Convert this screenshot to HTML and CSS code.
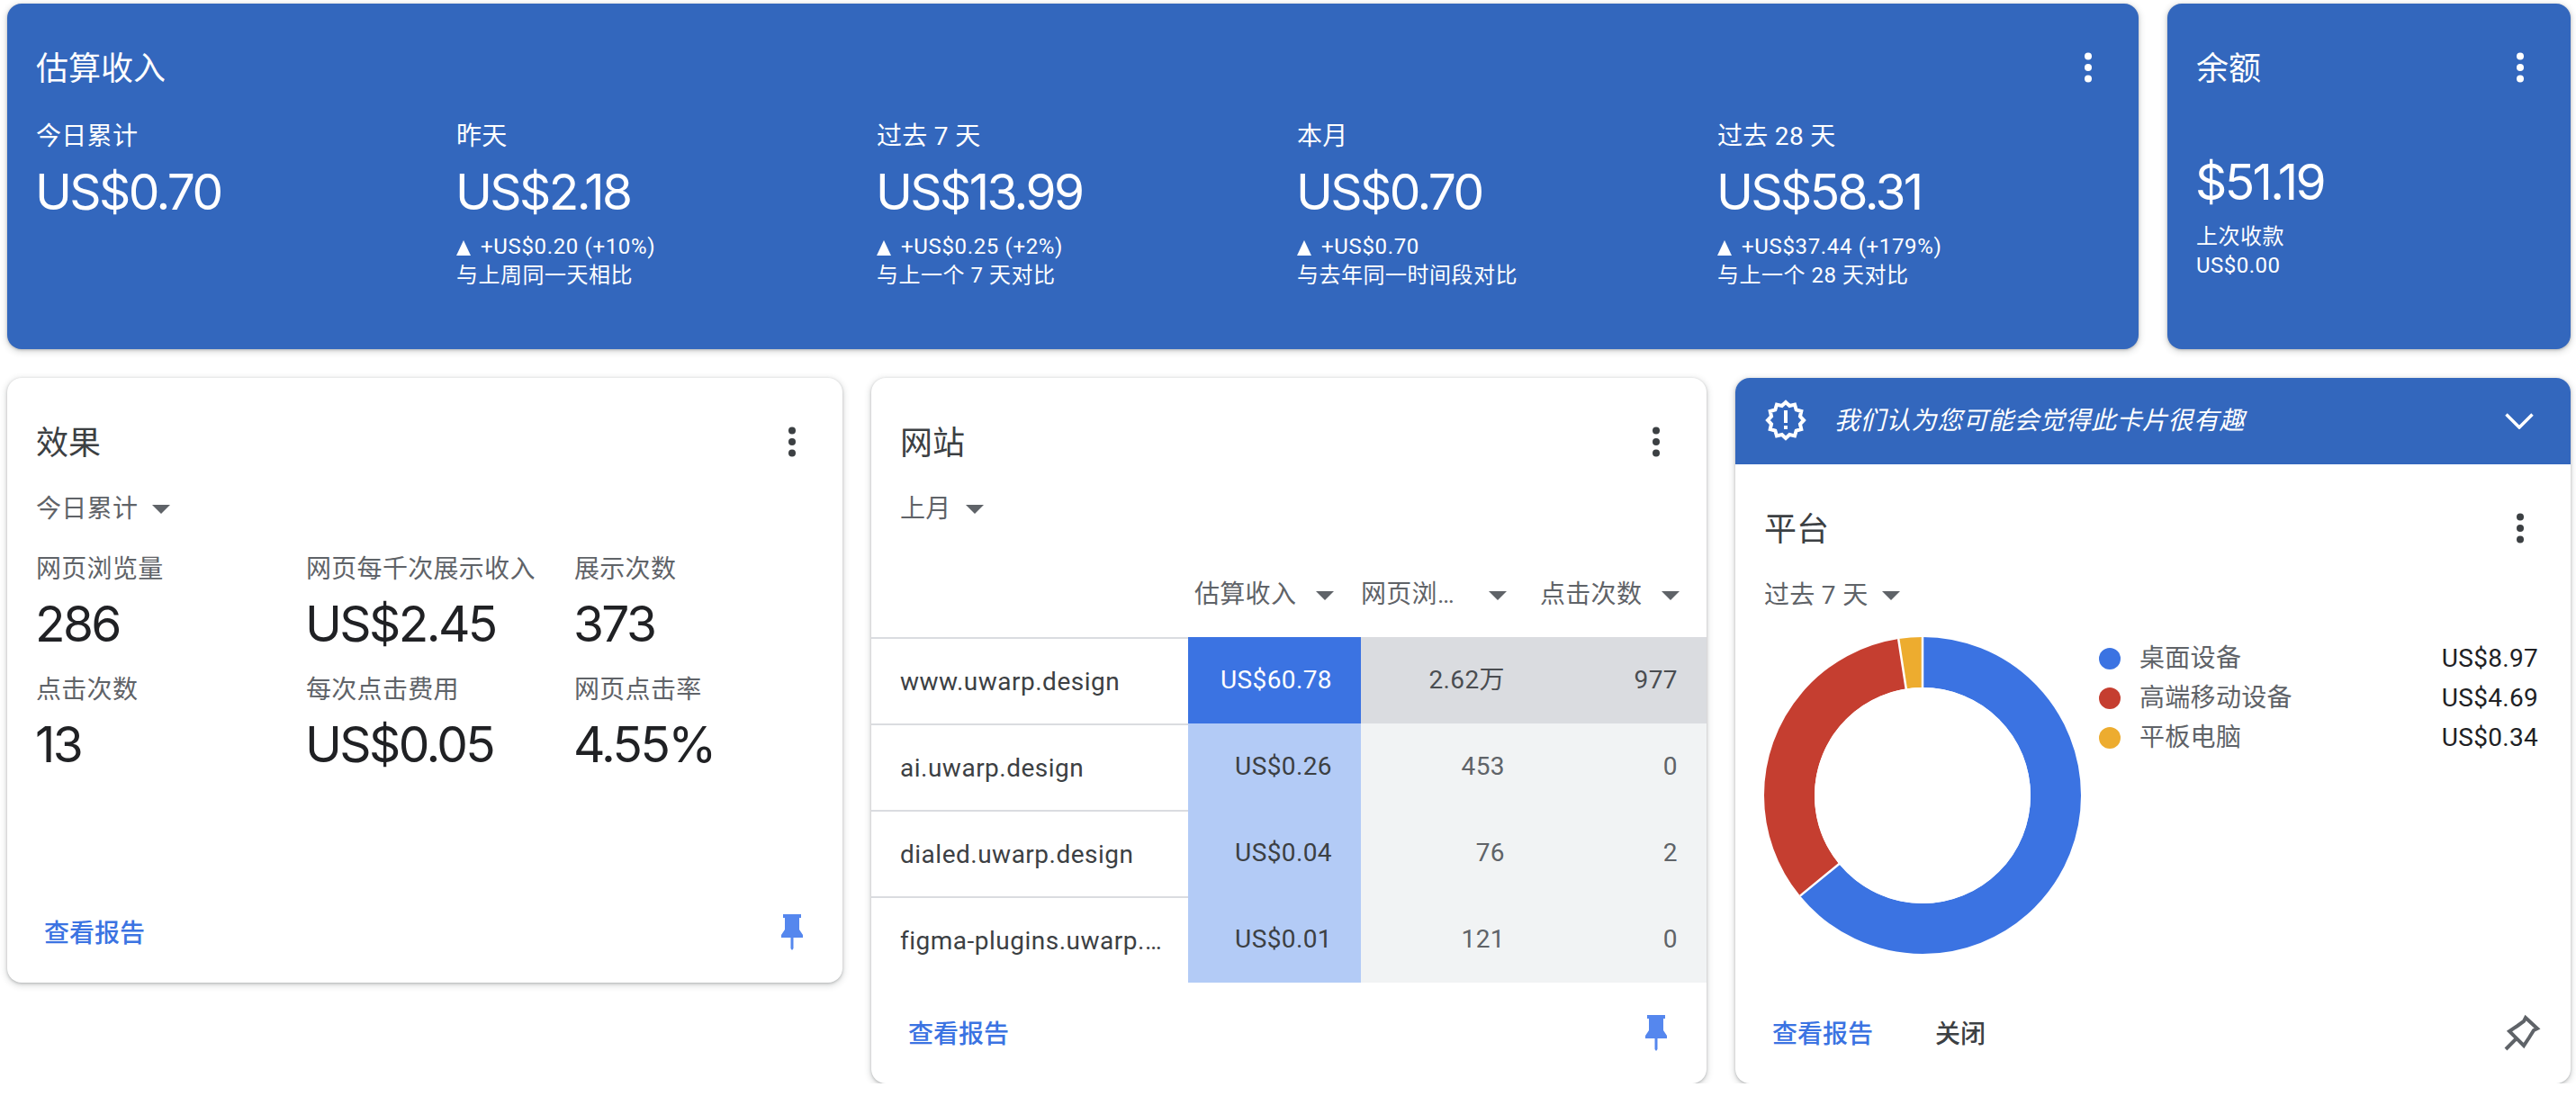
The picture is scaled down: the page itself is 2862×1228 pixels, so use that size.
FILE: index.html
```html
<!DOCTYPE html>
<html lang="zh-CN">
<head>
<meta charset="utf-8">
<title>AdSense</title>
<link rel="stylesheet" href="styles.css">
</head>
<body>
<svg class="defs" width="0" height="0" aria-hidden="true">
  <symbol id="kebab" viewBox="0 0 48 48"><circle cx="24" cy="11.5" r="4"/><circle cx="24" cy="24" r="4"/><circle cx="24" cy="36.5" r="4"/></symbol>
  <symbol id="pin" viewBox="0 0 24 40"><path d="M2 0H22V4H20V17L24 23V26H13.5V38L12 40L10.5 38V26H0V23L4 17V4H2Z"/></symbol>
</svg>
<main class="page">
  <section class="top-row">
    <article class="card blue earnings">
      <header class="card-head"><h2 class="title">估算收入</h2><svg class="kebab"><use href="#kebab"/></svg></header>
      <div class="earn-grid">
        <div><div class="label">今日累计</div><div class="big">US$0.70</div></div>
        <div><div class="label">昨天</div><div class="big">US$2.18</div><div class="note"><div class="delta"><i class="up"></i>+US$0.20 (+10%)</div><div>与上周同一天相比</div></div></div>
        <div><div class="label">过去 7 天</div><div class="big">US$13.99</div><div class="note"><div class="delta"><i class="up"></i>+US$0.25 (+2%)</div><div>与上一个 7 天对比</div></div></div>
        <div><div class="label">本月</div><div class="big">US$0.70</div><div class="note"><div class="delta"><i class="up"></i>+US$0.70</div><div>与去年同一时间段对比</div></div></div>
        <div><div class="label">过去 28 天</div><div class="big">US$58.31</div><div class="note"><div class="delta"><i class="up"></i>+US$37.44 (+179%)</div><div>与上一个 28 天对比</div></div></div>
      </div>
    </article>
    <article class="card blue balance">
      <header class="card-head"><h2 class="title">余额</h2><svg class="kebab"><use href="#kebab"/></svg></header>
      <div class="big balance-value">$51.19</div>
      <div class="note"><div>上次收款</div><div>US$0.00</div></div>
    </article>
  </section>

  <section class="bottom-row">
    <article class="card">
      <header class="card-head"><h2 class="title">效果</h2><svg class="kebab"><use href="#kebab"/></svg></header>
      <div class="range">今日累计<i class="tri"></i></div>
      <div class="perf-grid">
        <div><div class="label">网页浏览量</div><div class="big">286</div></div>
        <div><div class="label">网页每千次展示收入</div><div class="big">US$2.45</div></div>
        <div><div class="label">展示次数</div><div class="big">373</div></div>
        <div><div class="label">点击次数</div><div class="big">13</div></div>
        <div><div class="label">每次点击费用</div><div class="big">US$0.05</div></div>
        <div><div class="label">网页点击率</div><div class="big">4.55%</div></div>
      </div>
      <footer class="card-foot perf-foot"><a class="link">查看报告</a><svg class="pin"><use href="#pin"/></svg></footer>
    </article>

    <article class="card">
      <header class="card-head"><h2 class="title">网站</h2><svg class="kebab"><use href="#kebab"/></svg></header>
      <div class="range">上月<i class="tri"></i></div>
      <div class="sites">
        <div class="th"></div>
        <div class="th"><span class="th-text">估算收入</span><i class="tri"></i></div>
        <div class="th"><span class="th-text th-wide">网页浏…</span><i class="tri"></i></div>
        <div class="th"><span class="th-text">点击次数</span><i class="tri"></i></div>

        <div class="site"><span class="site-name">www.uwarp.design</span></div>
        <div class="num hot">US$60.78</div><div class="num dark">2.62万</div><div class="num dark">977</div>

        <div class="site"><span class="site-name">ai.uwarp.design</span></div>
        <div class="num cool">US$0.26</div><div class="num pale">453</div><div class="num pale">0</div>

        <div class="site"><span class="site-name">dialed.uwarp.design</span></div>
        <div class="num cool">US$0.04</div><div class="num pale">76</div><div class="num pale">2</div>

        <div class="site"><span class="site-name">figma-plugins.uwarp.…</span></div>
        <div class="num cool">US$0.01</div><div class="num pale">121</div><div class="num pale">0</div>
      </div>
      <footer class="card-foot"><a class="link">查看报告</a><svg class="pin"><use href="#pin"/></svg></footer>
    </article>

    <article class="card">
      <div class="banner">
        <svg class="badge" viewBox="0 0 48 48">
          <polygon class="badge-star" points="44,24 39.94,28.27 41.32,34 35.67,35.67 34,41.32 28.27,39.94 24,44 19.73,39.94 14,41.32 12.33,35.67 6.68,34 8.06,28.27 4,24 8.06,19.73 6.68,14 12.33,12.33 14,6.68 19.73,8.06 24,4 28.27,8.06 34,6.68 35.67,12.33 41.32,14 39.94,19.73"/>
          <rect class="badge-mark" x="22" y="13" width="4" height="14"/>
          <rect class="badge-mark" x="22" y="30" width="4" height="4"/>
        </svg>
        <em class="banner-text">我们认为您可能会觉得此卡片很有趣</em>
        <svg class="chevron" viewBox="0 0 32 18"><path d="M1.5 1.5L16 16L30.5 1.5"/></svg>
      </div>
      <header class="card-head"><h2 class="title">平台</h2><svg class="kebab"><use href="#kebab"/></svg></header>
      <div class="range">过去 7 天<i class="tri"></i></div>
      <div class="platform">
        <svg class="donut" viewBox="0 0 352 352">
          <g class="ring">
            <circle class="slice s-blue" cx="176" cy="176" r="148" pathLength="100" stroke-dasharray="64.07 100"/>
            <circle class="slice s-red" cx="176" cy="176" r="148" pathLength="100" stroke-dasharray="33.5 100" stroke-dashoffset="-64.07"/>
            <circle class="slice s-amber" cx="176" cy="176" r="148" pathLength="100" stroke-dasharray="2.43 100" stroke-dashoffset="-97.57"/>
          </g>
          <path class="cut" d="M176 176V0M176 176L39.9 287.6M176 176L149.2 2"/>
          <circle class="hole" cx="176" cy="176" r="120"/>
        </svg>
        <ul class="legend">
          <li class="legend-row"><i class="dot d-blue"></i><span class="legend-name">桌面设备</span><span class="legend-val">US$8.97</span></li>
          <li class="legend-row"><i class="dot d-red"></i><span class="legend-name">高端移动设备</span><span class="legend-val">US$4.69</span></li>
          <li class="legend-row"><i class="dot d-amber"></i><span class="legend-name">平板电脑</span><span class="legend-val">US$0.34</span></li>
        </ul>
      </div>
      <footer class="card-foot platform-foot">
        <a class="link">查看报告</a><a class="close">关闭</a>
        <svg class="pin-outline" viewBox="0 0 44 44"><path d="M26 5L39 17L35 19L30 27L24 36L8 20L17 14L24 9Z"/><path d="M15 29L4 40"/></svg>
      </footer>
    </article>
  </section>
</main>
</body>
</html>
```

FILE: styles.css
```css
* { box-sizing: border-box; }
html, body { margin: 0; background: #fff; }
body { font-family: Roboto, "Noto Sans CJK SC", sans-serif; color: #202124; font-size: 28px; line-height: 40px; letter-spacing: .3px; }
.defs { position: absolute; }
.page { padding: 4px 6px 0 8px; }

.top-row { display: flex; gap: 32px; }
.bottom-row { display: grid; grid-template-columns: repeat(3, 928px); gap: 32px; margin-top: 32px; align-items: start; }

.card {
  background: #fff;
  border-radius: 16px;
  overflow: hidden;
  box-shadow: 0 1px 3px rgba(60,64,67,.3), 0 2px 6px 2px rgba(60,64,67,.15);
}
.blue { background: #3367bd; color: #fff; height: 384px; }
.earnings { width: 2368px; }
.balance { width: 448px; }

.card-head { display: flex; align-items: center; justify-content: space-between; padding: 47px 32px 0; height: 95px; }
.title { margin: 4px 0 0; font-size: 36px; line-height: 48px; font-weight: 400; color: #3c4043; letter-spacing: 0; }
.blue .title { color: #fff; }
.kebab { width: 48px; height: 48px; fill: #3c4043; flex: none; }
.blue .kebab { fill: #fff; }

.earn-grid { display: grid; grid-template-columns: repeat(5, 467px); padding: 33px 0 0 32px; }
.label { font-size: 28px; line-height: 40px; color: #5f6368; white-space: nowrap; }
.blue .label { color: #fff; }
.big { font-family: Inter, Roboto, sans-serif; font-size: 55px; line-height: 72px; margin: 5px 0 0 -1px; letter-spacing: -2.6px; white-space: nowrap; }
.note { font-size: 24px; line-height: 32px; margin-top: 9px; white-space: nowrap; letter-spacing: .5px; }
.delta { letter-spacing: .65px; }
.up { display: inline-block; width: 0; height: 0; margin-right: 11px; border-left: 8px solid transparent; border-right: 8px solid transparent; border-bottom: 17px solid #fff; vertical-align: -2px; }
.balance-value { padding-left: 32px; margin-top: 67px; }
.balance .note { padding-left: 32px; }

.range { display: flex; align-items: center; gap: 16px; margin: 31px 0 0 32px; color: #5f6368; height: 40px; }
.tri { display: block; width: 0; height: 0; flex: none; border-left: 10px solid transparent; border-right: 10px solid transparent; border-top: 10px solid #5f6368; }

.perf-grid { display: grid; grid-template-columns: 300px 298px 1fr; row-gap: 18px; padding: 27px 0 0 32px; }
.perf-grid .big { margin-top: 4px; }
.perf-foot { margin-top: 137px; }
.card-foot { display: flex; align-items: center; justify-content: space-between; height: 72px; margin-bottom: 20px; padding: 0 44px 0 41px; }
.link { color: #3b73e2; font-weight: 500; padding-top: 4px; letter-spacing: 0; }
.close { color: #3c4043; font-weight: 500; margin: 0 auto 0 69px; padding-top: 4px; letter-spacing: 0; }
.pin { width: 24px; height: 40px; fill: #5587ee; }

.sites { display: grid; grid-template-columns: 352px 192px 192px 192px; grid-template-rows: 69px repeat(4, 96px); margin: 53px 0 20px; }
.th { display: flex; align-items: flex-start; justify-content: flex-end; gap: 23px; padding: 2px 30px 0 0; color: #5f6368; }
.th .tri { margin-top: 16px; }
.th-text { width: 112px; flex: none; color: #5f6368; white-space: nowrap; }
.th-wide { width: 119px; }
.site { display: flex; align-items: center; padding: 1px 24px 0 32px; border-top: 2px solid #dadce0; color: #3c4043; min-width: 0; }
.site-name { white-space: nowrap; letter-spacing: .5px; }
.num { display: flex; align-items: center; justify-content: flex-end; padding: 0 32px 0 0; color: #5f6368; letter-spacing: .4px; }
.hot { background: #3b73e2; color: #fff; }
.dark { background: #dadce0; color: #4a4d51; }
.cool { background: #b3cbf6; color: #3c4043; }
.pale { background: #f1f3f4; }

.banner { display: flex; align-items: center; height: 96px; background: #3367bd; color: #fff; padding: 0 41px 0 32px; }
.badge { width: 48px; height: 48px; flex: none; margin-top: -2px; }
.badge-star { fill: none; stroke: #fff; stroke-width: 4; }
.badge-mark { fill: #fff; }
.banner-text { margin-left: 30px; font-style: italic; flex: 1; letter-spacing: .5px; }
.chevron { width: 32px; height: 18px; flex: none; fill: none; stroke: #fff; stroke-width: 3.5; }

.platform { display: flex; margin: 26px 36px 52px 32px; }
.donut { width: 352px; height: 352px; flex: none; }
.ring { transform: rotate(-90deg); transform-origin: 176px 176px; }
.slice { fill: none; stroke-width: 56; }
.s-blue { stroke: #3b73e2; }
.s-red { stroke: #c53e30; }
.s-amber { stroke: #edac2f; }
.cut { stroke: #fff; stroke-width: 2.5; fill: none; }
.hole { fill: #fff; }
.legend { list-style: none; margin: 2px 0 0 20px; padding: 0; flex: 1; }
.legend-row { display: flex; align-items: center; height: 44px; }
.dot { width: 24px; height: 24px; border-radius: 50%; flex: none; margin-right: 21px; }
.d-blue { background: #3b73e2; }
.d-red { background: #c53e30; }
.d-amber { background: #edac2f; }
.legend-name { flex: 1; color: #5f6368; }
.legend-val { color: #202124; }
.pin-outline { width: 44px; height: 44px; fill: none; stroke: #5f6368; stroke-width: 4; margin-right: -12px; }
```
